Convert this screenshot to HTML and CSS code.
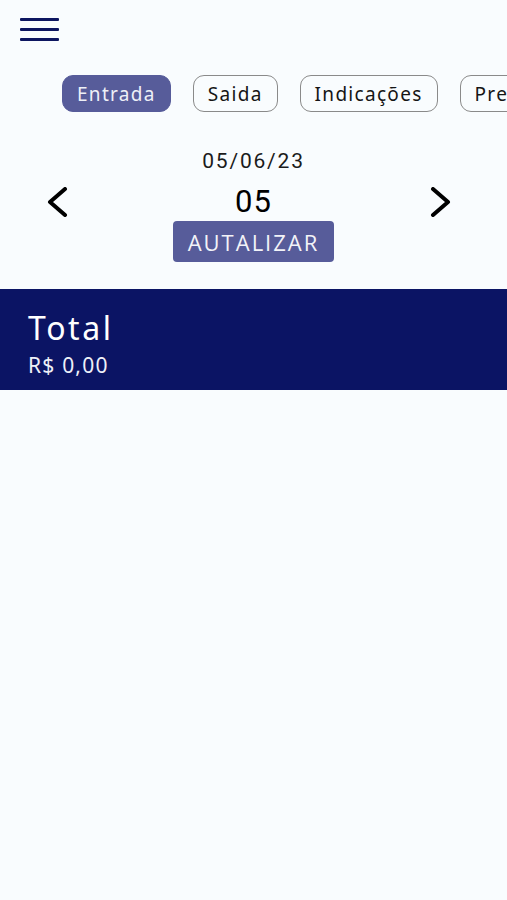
FILE: index.html
```html
<!DOCTYPE html>
<html lang="pt-BR">
<head>
<meta charset="utf-8">
<title>Entrada</title>
<link rel="stylesheet" href="styles.css">
</head>
<body>
<div class="app">
  <header class="topbar">
    <button class="menu-btn" aria-label="Menu">
      <span class="bar"></span><span class="bar"></span><span class="bar"></span>
    </button>
  </header>
  <nav class="tabs">
    <span class="chip chip-active">Entrada</span>
    <span class="chip">Saida</span>
    <span class="chip">Indicações</span>
    <span class="chip">Presenças</span>
  </nav>
  <section class="date-picker">
    <div class="date">05/06/23</div>
    <div class="day-row">
      <svg class="chev chev-left" viewBox="0 0 22 30" width="22" height="30"><path d="M19 2 L4 15 L19 28" fill="none" stroke="#000" stroke-width="4" stroke-linecap="round" stroke-linejoin="round"/></svg>
      <div class="day">05</div>
      <svg class="chev chev-right" viewBox="0 0 22 30" width="22" height="30"><path d="M3 2 L18 15 L3 28" fill="none" stroke="#000" stroke-width="4" stroke-linecap="round" stroke-linejoin="round"/></svg>
    </div>
    <button class="update-btn">AUTALIZAR</button>
  </section>
  <section class="total">
    <div class="total-title">Total</div>
    <div class="total-value">R$ 0,00</div>
  </section>
</div>
</body>
</html>
```
FILE: styles.css
```css
* { box-sizing: border-box; }
html, body { margin: 0; padding: 0; }
body {
  background: #f9fcfe;
  font-family: "Noto Sans", "DejaVu Sans", sans-serif;
  color: #111;
  overflow: hidden;
  width: 507px;
  height: 900px;
}
.app { display: flex; flex-direction: column; }
.topbar { padding: 18px 0 0 20px; height: 75px; }
.menu-btn {
  display: flex; flex-direction: column; gap: 7px;
  padding: 0; border: 0; background: none; width: 39px;
}
.menu-btn .bar { display: block; height: 3px; width: 39px; background: #0d1660; border-radius: 1px; }
.tabs {
  display: flex; gap: 22px; padding-left: 62px; white-space: nowrap; overflow: hidden;
}
.chip {
  flex: none;
  height: 37px; line-height: 37px;
  padding: 0 14px;
  border: 1px solid #8a8a8a; border-radius: 11px;
  font-size: 19px; letter-spacing: 1.3px;
  color: #151515;
}
.chip-active { background: #575c9a; border-color: #575c9a; color: #eef0f7; }
.date-picker { display: flex; flex-direction: column; align-items: center; padding-top: 37px; }
.date { font-family: Roboto, "Liberation Sans", sans-serif; font-size: 21px; letter-spacing: 1.8px; line-height: 24px; color: #1b1b1b; }
.day-row {
  display: grid; grid-template-columns: 1fr auto 1fr; align-items: center;
  width: 100%; padding: 0 46px; margin-top: 12px;
}
.day { font-family: Roboto, "Liberation Sans", sans-serif; font-size: 31px; line-height: 34px; letter-spacing: 1px; color: #000; }
.chev { display: block; }
.chev-left { justify-self: start; }
.chev-right { justify-self: end; margin-right: 9px; }
.update-btn {
  margin-top: 2px;
  width: 161px; height: 41px;
  border: 0; border-radius: 4px;
  background: #575c9a; color: #f2f3f8;
  font-family: "Open Sans", sans-serif; font-size: 22px; letter-spacing: 2px;
  padding: 0;
}
.total {
  margin-top: 27px;
  height: 101px;
  background: #0b1464;
  padding: 21px 28px 0;
  color: #fff;
}
.total-title { font-size: 32px; line-height: 36px; letter-spacing: 2.6px; }
.total-value { font-size: 21px; line-height: 26px; margin-top: 6px; letter-spacing: 1.2px; color: #eef0f8; }
```
